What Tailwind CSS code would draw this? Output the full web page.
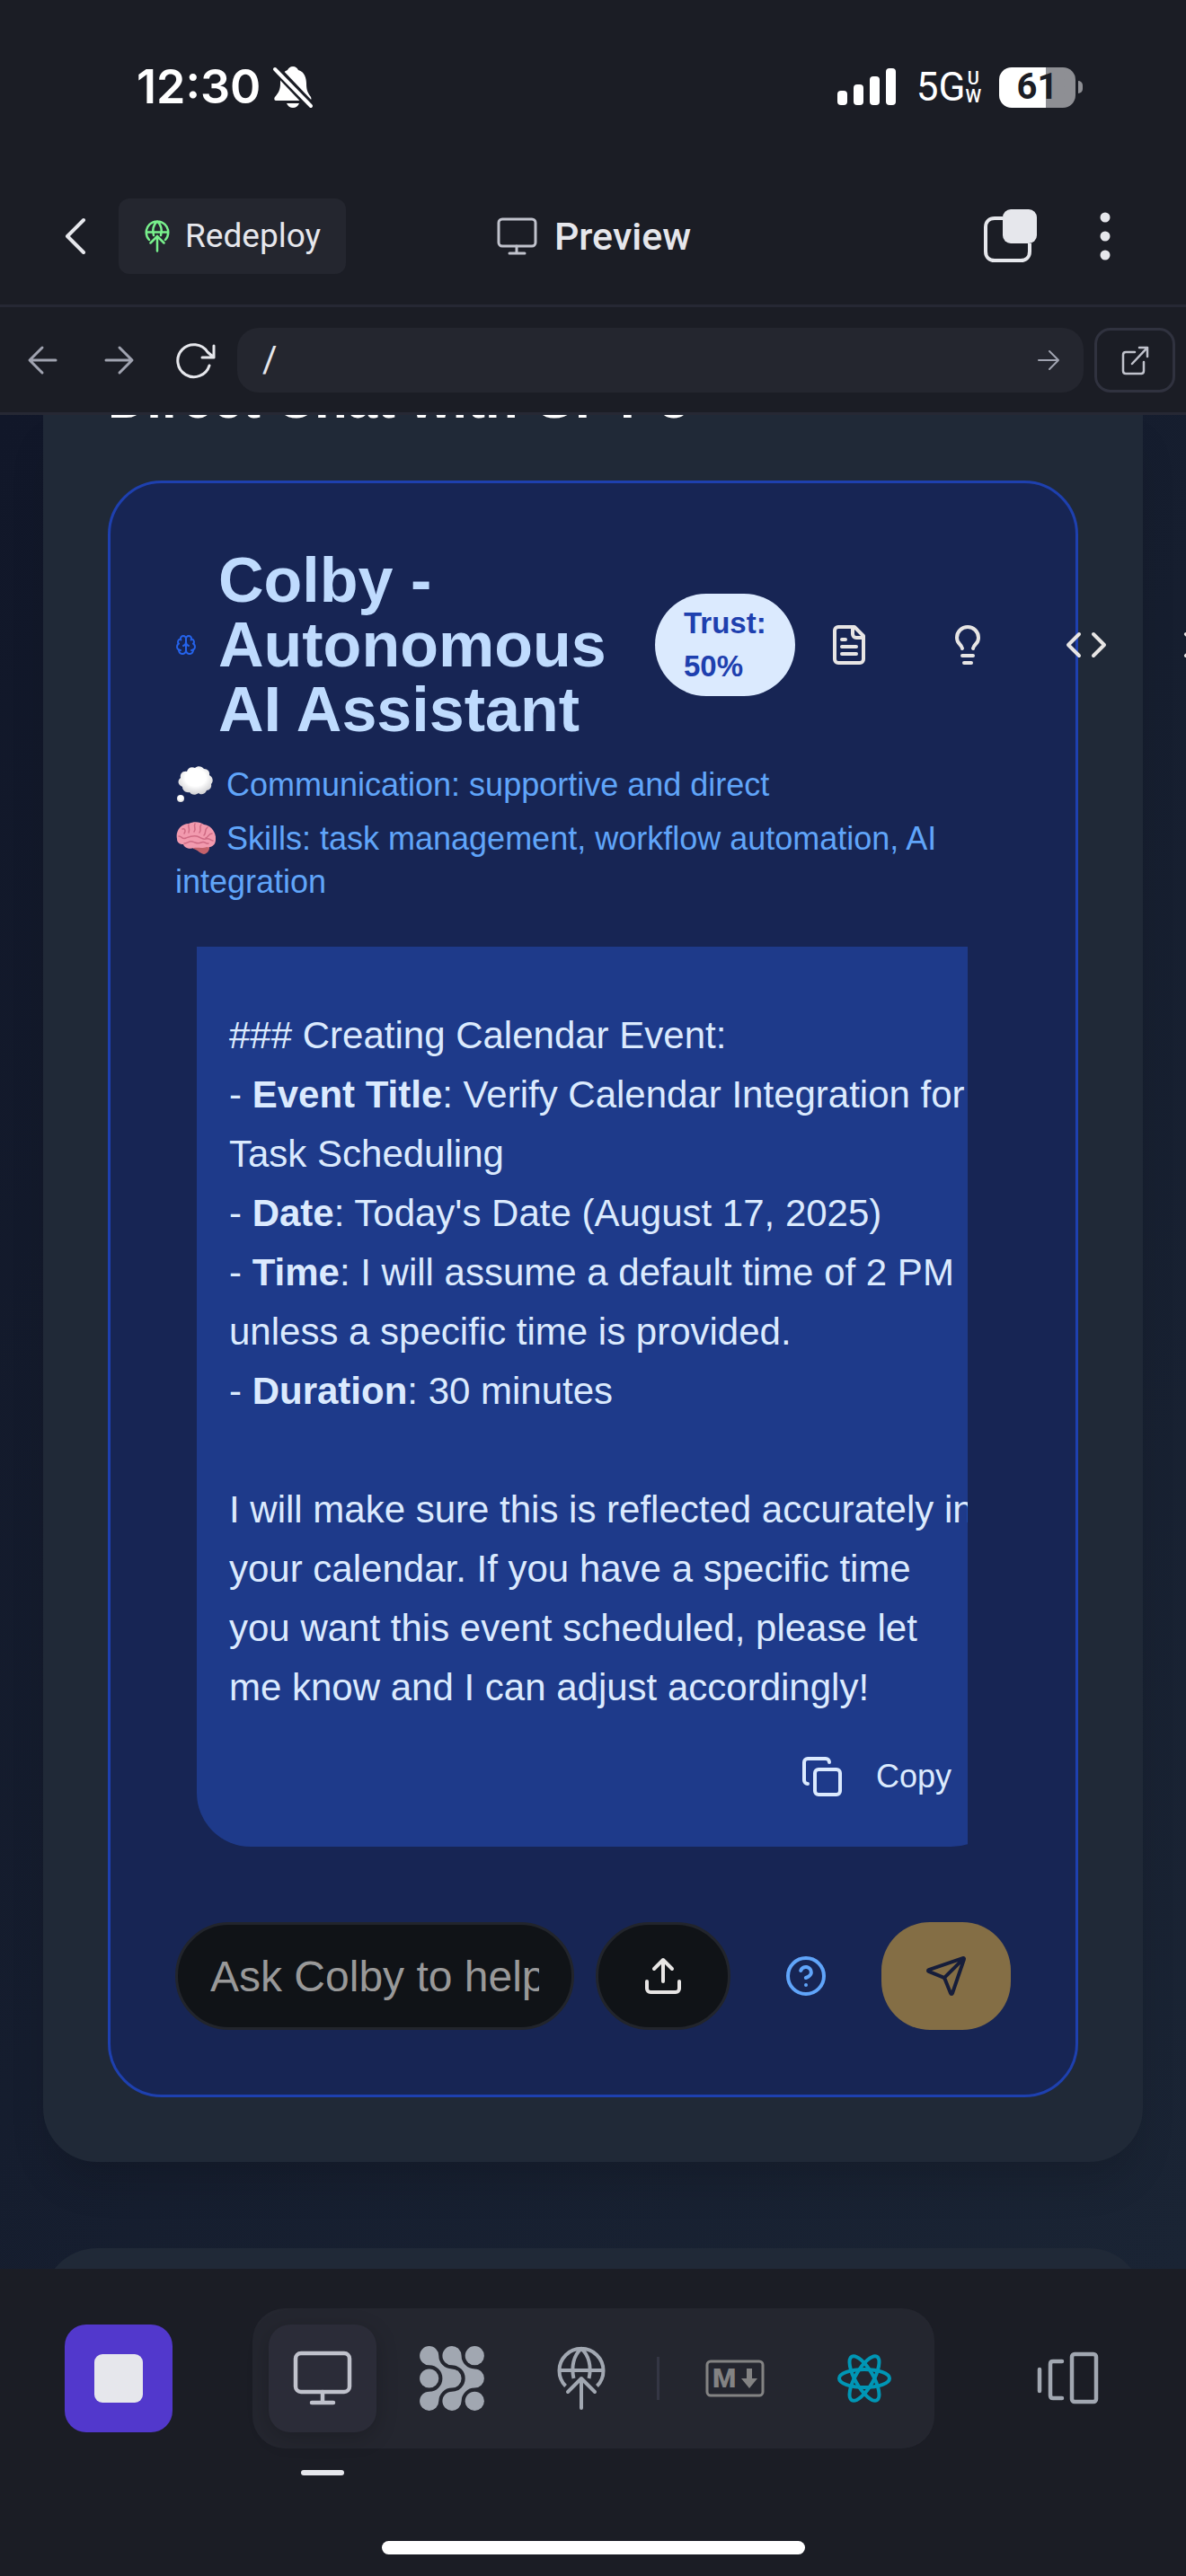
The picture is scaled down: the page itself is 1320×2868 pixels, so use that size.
<!DOCTYPE html>
<html lang="en">
<head>
<meta charset="utf-8">
<meta name="viewport" content="width=device-width, initial-scale=1">
<title>Preview</title>
<script src="https://cdn.jsdelivr.net/npm/@tailwindcss/browser@4"></script>
</head>
<body class="flex h-screen flex-col overflow-hidden bg-[#1b1d25] font-['Liberation_Sans',Arial,sans-serif] text-[#e6e7ec]">

<!-- Status bar -->
<div class="flex h-[187px] shrink-0 items-start justify-between pt-[62px] pr-[115px] pl-[152px] text-white">
  <div class="flex h-[70px] items-center gap-3">
    <span class="font-['Inter',sans-serif] text-[52px] font-semibold">12:30</span>
    <svg class="h-12 w-12" viewBox="0 0 48 48" fill="currentColor" aria-label="Silent mode">
      <path d="M24 1c3 0 5 2 6 4 7 2 9 9 9 15 0 8 2 11 5 15 1 2 0 4-1 4H5c-2 0-2-3-1-4 4-5 6-8 6-15 0-7 2-13 8-15 1-2 3-4 6-4z"/>
      <path d="M17 42h14c-1 3-4 5-7 5s-6-2-7-5z"/>
      <path d="M3 2l42 44" stroke="#1b1d25" stroke-width="10"/>
      <path d="M4 4l40 41" stroke="currentColor" stroke-width="4" stroke-linecap="round"/>
    </svg>
  </div>
  <div class="flex h-[70px] items-center">
    <svg class="mr-[22px] h-[42px] w-[66px]" viewBox="0 0 66 42" fill="currentColor" aria-label="Signal">
      <rect x="0" y="25" width="11" height="16" rx="4"/><rect x="18" y="18" width="11" height="23" rx="4"/><rect x="36" y="9" width="11" height="32" rx="4"/><rect x="54" y="0" width="11" height="41" rx="4"/>
    </svg>
    <span class="font-['Roboto',sans-serif] text-[44px]">5G</span>
    <span class="mr-5 flex flex-col items-center font-['Roboto',sans-serif] text-xl leading-5 font-medium"><span>U</span><span>W</span></span>
    <span class="flex h-[45px] w-[85px] items-center justify-center rounded-[14px] bg-linear-to-r from-white from-61% to-[#8e8f94] to-61% font-['Roboto',sans-serif] text-[40px] font-bold text-[#1b1d25]">61</span>
    <span class="ml-[3px] h-[14px] w-[5px] rounded-r-full bg-[#8e8f94]"></span>
  </div>
</div>

<!-- App header -->
<header class="grid h-[155px] shrink-0 grid-cols-[1fr_auto_1fr] items-center border-b-3 border-[#262834] font-['Roboto',sans-serif]">
  <div class="flex items-center pl-9">
    <button class="flex h-24 w-24 items-center justify-center" aria-label="Back">
      <svg class="h-12 w-12" viewBox="0 0 48 48" fill="none" stroke="currentColor" stroke-width="4" stroke-linecap="round" stroke-linejoin="round"><path d="M33 6L15 24l18 18"/></svg>
    </button>
    <button class="flex h-[84px] items-center gap-4 rounded-xl bg-[#24262f] px-7 text-[37px]">
      <svg class="h-9 w-[30px]" viewBox="0 0 54 72" fill="none" stroke="#78f08c" stroke-width="5" stroke-linecap="round"><path d="M9 44a24.500 24.500 0 1 1 36 0M3 27h48M19 34c-3-12 0-24 8-31 8 7 11 19 8 31M27 36v33M12 51l15-15 15 15"/></svg>
      Redeploy
    </button>
  </div>
  <h1 class="flex items-center gap-[18px] text-[43px] font-medium">
    <svg class="h-12 w-12" viewBox="0 0 48 48" fill="none" stroke="#c0c2cc" stroke-width="3" stroke-linecap="round" stroke-linejoin="round"><rect x="4" y="5" width="41" height="30" rx="4"/><path d="M24 35v8M16 43h17"/></svg>
    Preview
  </h1>
  <div class="flex items-center justify-end gap-2.5 pr-[42px]">
    <button class="flex h-24 w-24 items-center justify-center" aria-label="Tabs">
      <svg class="h-[60px] w-[60px]" viewBox="0 0 60 60"><path d="M22 10H13C7 10 3 14 3 20V47C3 53 7 57 13 57H42C48 57 52 53 52 47V38" fill="none" stroke="currentColor" stroke-width="4"/><rect x="22" y="0" width="38" height="38" rx="9" fill="currentColor"/></svg>
    </button>
    <button class="flex h-24 w-24 items-center justify-center" aria-label="More">
      <svg class="h-[60px] w-3" viewBox="0 0 12 60" fill="currentColor"><circle cx="6" cy="9" r="5.500"/><circle cx="6" cy="30" r="5.500"/><circle cx="6" cy="51" r="5.500"/></svg>
    </button>
  </div>
</header>

<!-- Address bar -->
<nav class="flex h-[120px] shrink-0 items-center gap-3 border-b-3 border-[#262834] px-3">
  <button class="flex h-[72px] w-[72px] items-center justify-center text-[#a0a3b0]" aria-label="Go back"><svg class="h-12 w-12" viewBox="0 0 48 48" fill="none" stroke="currentColor" stroke-width="3" stroke-linecap="round" stroke-linejoin="round"><path d="M38 24H10M23 10L9 24l14 14"/></svg></button>
  <button class="flex h-[72px] w-[72px] items-center justify-center text-[#a0a3b0]" aria-label="Go forward"><svg class="h-12 w-12" viewBox="0 0 48 48" fill="none" stroke="currentColor" stroke-width="3" stroke-linecap="round" stroke-linejoin="round"><path d="M10 24h28M25 10l14 14-14 14"/></svg></button>
  <button class="flex h-[72px] w-[72px] items-center justify-center" aria-label="Reload"><svg class="h-12 w-12" viewBox="0 0 48 48" fill="none" stroke="currentColor" stroke-width="3" stroke-linecap="round" stroke-linejoin="round"><path d="M41 30a18 18 0 1 1-2-15l7 6M46 8v13H33"/></svg></button>
  <form class="flex h-[72px] min-w-0 flex-1 items-center rounded-3xl bg-[#24262f] pr-[15px] pl-7">
    <input class="min-w-0 flex-1 bg-transparent font-['Roboto',sans-serif] text-[40px] outline-none" aria-label="Path" value="/">
    <button type="button" class="flex h-12 w-12 items-center justify-center text-[#a0a3b0]" aria-label="Go"><svg class="h-9 w-9" viewBox="0 0 36 36" fill="none" stroke="currentColor" stroke-width="2" stroke-linecap="round" stroke-linejoin="round"><path d="M7 18h22M19 8l10 10-10 10"/></svg></button>
  </form>
  <button class="flex h-[72px] w-[90px] items-center justify-center rounded-[18px] border-3 border-[#30323f] text-[#c0c2cc]" aria-label="Open in new tab"><svg class="h-9 w-9" viewBox="0 0 36 36" fill="none" stroke="currentColor" stroke-width="2.500" stroke-linecap="round" stroke-linejoin="round"><path d="M18 9H8c-2 0-3 1-3 3v18c0 2 1 3 3 3h17c2 0 3-1 3-3V20M15 22L32 4M23 4h9v10"/></svg></button>
</nav>

<!-- Previewed page -->
<main class="flex min-h-0 flex-1 flex-col gap-24 overflow-hidden bg-linear-to-br from-[#111729] to-[#1a2434] px-12">
  <section class="shrink-0 rounded-b-[60px] bg-[#202937] px-[72px] pb-[72px] shadow-[0_30px_45px_-9px_rgba(0,0,0,0.15)]">
    <h2 class="-mt-[47px] text-[60px] leading-[60px] font-bold text-white">Direct Chat with GPT-5</h2>

    <div class="mt-[60px] rounded-[60px] border-3 border-[#1e40af] bg-[#172554] p-[72px]">
      <div class="flex items-center">
        <svg class="mr-6 h-6 w-6 shrink-0" viewBox="0 0 24 24" fill="none" stroke="#2563eb" stroke-width="2" stroke-linecap="round" stroke-linejoin="round"><path d="M12 5a3 3 0 1 0-5.997.125 4 4 0 0 0-2.526 5.770 4 4 0 0 0 .556 6.588A4 4 0 1 0 12 18Z"/><path d="M12 5a3 3 0 1 1 5.997.125 4 4 0 0 1 2.526 5.770 4 4 0 0 1-.556 6.588A4 4 0 1 1 12 18Z"/><path d="M15 13a4.500 4.500 0 0 1-3-4 4.500 4.500 0 0 1-3 4M17.600 6.500a3 3 0 0 0 .399-1.375M6.003 5.125A3 3 0 0 0 6.401 6.500M3.477 10.896a4 4 0 0 1 .585-.396M19.938 10.500a4 4 0 0 1 .585.396M6 18a4 4 0 0 1-1.967-.516M19.967 17.484A4 4 0 0 1 18 18"/></svg>
        <h3 class="w-[486px] shrink-0 text-[70px] leading-[72px] font-bold text-[#bfdbfe]">Colby - Autonomous AI Assistant</h3>
        <span class="flex h-[114px] w-[156px] shrink-0 items-center rounded-full bg-[#dbeafe] pl-8 text-[33px] leading-[48px] font-bold text-[#1e40af]">Trust:<br>50%</span>
        <div class="flex shrink-0 gap-3 text-[#e7e5e4]">
          <button class="flex h-[120px] w-[120px] items-center justify-center" aria-label="Documents"><svg class="h-12 w-12" viewBox="0 0 24 24" fill="none" stroke="currentColor" stroke-width="2" stroke-linecap="round" stroke-linejoin="round"><path d="M15 2H6a2 2 0 0 0-2 2v16a2 2 0 0 0 2 2h12a2 2 0 0 0 2-2V7Z"/><path d="M14 2v4a2 2 0 0 0 2 2h4M10 9H8M16 13H8M16 17H8"/></svg></button>
          <button class="flex h-[120px] w-[120px] items-center justify-center" aria-label="Ideas"><svg class="h-12 w-12" viewBox="0 0 24 24" fill="none" stroke="currentColor" stroke-width="2" stroke-linecap="round" stroke-linejoin="round"><path d="M15 14c.2-1 .7-1.700 1.500-2.500 1-.9 1.500-2.200 1.500-3.500A6 6 0 0 0 6 8c0 1 .2 2.200 1.500 3.500.7.7 1.300 1.500 1.500 2.500M9 18h6M10 22h4"/></svg></button>
          <button class="flex h-[120px] w-[120px] items-center justify-center" aria-label="Code"><svg class="h-12 w-12" viewBox="0 0 24 24" fill="none" stroke="currentColor" stroke-width="2" stroke-linecap="round" stroke-linejoin="round"><path d="M16 18l6-6-6-6M8 6l-6 6 6 6"/></svg></button>
          <button class="flex h-[120px] w-[102px] items-center justify-center" aria-label="Close"><svg class="h-12 w-12" viewBox="0 0 24 24" fill="none" stroke="currentColor" stroke-width="2" stroke-linecap="round" stroke-linejoin="round"><path d="M18 6L6 18M6 6l12 12"/></svg></button>
        </div>
      </div>

      <div class="mt-6 flex flex-col gap-3 text-4xl leading-[48px] text-[#60a5fa]">
        <p>
          <svg class="mr-0.5 inline-block h-[45px] w-[45px] align-[-10px]" viewBox="0 0 45 45" role="img" aria-label="Thought bubble"><defs><radialGradient id="puff" cx=".5" cy=".4" r=".6"><stop offset=".5" stop-color="#fff"/><stop offset="1" stop-color="#cfcfd2"/></radialGradient></defs><path d="M13 8c1-4 5-6 9-4 3-3 8-2 10 1 4 0 7 3 6 7 4 2 5 7 2 10 1 4-2 7-5 7-2 5-7 5-9 3-4 3-8 2-10-1-4 1-8-2-8-6-5-2-6-7-2-10-1-4 2-8 7-7z" fill="url(#puff)"/><circle cx="6" cy="38" r="4" fill="url(#puff)"/></svg>
          Communication: supportive and direct
        </p>
        <p>
          <svg class="mr-0.5 inline-block h-[45px] w-[45px] align-[-10px]" viewBox="0 0 45 45" role="img" aria-label="Brain"><path d="M20 31c4-2 14-3 18-2 1 5-1 10-6 11-5-1-7-5-12-6z" fill="#c4626b"/><path d="M2 23C0 15 6 6 15 6c6-3 13-2 17 1 8 1 14 9 13 17 0 6-5 9-10 8-5 2-11 0-14 1-5 2-11 0-12-4-4 0-7-2-7-6z" fill="#f29aae"/><path d="M8 12c3-1 4 2 2 5M15 7c-1 4 2 4 0 9M22 6c-2 4 2 5-1 9M29 7c-3 3 1 6-2 9M36 10c-4 3-1 6-4 9M41 17c-4 0-4 4-7 5M4 20c4 0 3 4 8 2s7-3 12-2 5 4 10 3 5 2 8 2M10 28c4 0 5-3 9-2s6 3 10 1 5 2 8 1" fill="none" stroke="#cf6b84" stroke-width="1.500" stroke-linecap="round"/></svg>
          Skills: task management, workflow automation, AI integration
        </p>
      </div>

      <div class="mt-12 mr-12 ml-6 overflow-hidden">
        <article class="-mr-[42px] rounded-b-[60px] bg-[#1e3a8a] px-9 pt-[66px] pb-9 text-[42px] leading-[66px] text-[#dbeafe]">
          <p class="whitespace-nowrap">### Creating Calendar Event:<br>- <b>Event Title</b>: Verify Calendar Integration for<br>Task Scheduling<br>- <b>Date</b>: Today's Date (August 17, 2025)<br>- <b>Time</b>: I will assume a default time of 2 PM<br>unless a specific time is provided.<br>- <b>Duration</b>: 30 minutes<br><br>I will make sure this is reflected accurately in<br>your calendar. If you have a specific time<br>you want this event scheduled, please let<br>me know and I can adjust accordingly!</p>
          <div class="mt-6 flex justify-end">
            <button class="flex h-[84px] items-center gap-9 pr-6 text-4xl"><svg class="h-12 w-12" viewBox="0 0 24 24" fill="none" stroke="currentColor" stroke-width="2" stroke-linecap="round" stroke-linejoin="round"><rect width="14" height="14" x="8" y="8" rx="2"/><path d="M4 16c-1.100 0-2-.9-2-2V4c0-1.100.9-2 2-2h10c1.100 0 2 .9 2 2"/></svg>Copy</button>
          </div>
        </article>
      </div>

      <form class="mt-[84px] flex items-center gap-6">
        <input class="h-[120px] min-w-0 flex-1 rounded-full border-3 border-[#22252c] bg-[#101317] px-9 text-5xl text-white outline-none placeholder:text-[#999999]" aria-label="Message" placeholder="Ask Colby to help with tasks...">
        <button type="button" class="flex h-[120px] w-[150px] items-center justify-center rounded-full border-3 border-[#22252c] bg-[#101317] text-[#e7e5e4]" aria-label="Upload"><svg class="h-12 w-12" viewBox="0 0 24 24" fill="none" stroke="currentColor" stroke-width="2" stroke-linecap="round" stroke-linejoin="round"><path d="M21 15v4a2 2 0 0 1-2 2H5a2 2 0 0 1-2-2v-4M17 8l-5-5-5 5M12 3v12"/></svg></button>
        <button type="button" class="flex h-[120px] w-[120px] items-center justify-center text-[#60a5fa]" aria-label="Help"><svg class="h-12 w-12" viewBox="0 0 24 24" fill="none" stroke="currentColor" stroke-width="2" stroke-linecap="round" stroke-linejoin="round"><circle cx="12" cy="12" r="10"/><path d="M9.090 9a3 3 0 0 1 5.830 1c0 2-3 3-3 3M12 17h.01"/></svg></button>
        <button type="button" class="flex h-[120px] w-36 items-center justify-center rounded-[54px] bg-[#846e45] text-[#161d3a]" aria-label="Send"><svg class="h-12 w-12" viewBox="0 0 24 24" fill="none" stroke="currentColor" stroke-width="2" stroke-linecap="round" stroke-linejoin="round"><path d="M14.536 21.686a.5.5 0 0 0 .937-.024l6.500-19a.496.496 0 0 0-.635-.635l-19 6.500a.5.5 0 0 0-.024.937l7.930 3.180a2 2 0 0 1 1.112 1.110zM21.854 2.147l-10.940 10.939"/></svg></button>
      </form>
    </div>
  </section>
  <section class="h-36 shrink-0 rounded-t-[60px] bg-[#202937]"></section>
</main>

<!-- Bottom dock -->
<footer class="flex h-[342px] shrink-0 flex-col items-center justify-between pt-11 pb-6">
  <div class="flex w-full items-center justify-between px-[72px] text-[#a1a7b1]">
    <button class="flex h-[120px] w-[120px] items-center justify-center rounded-3xl bg-[#5238cc]" aria-label="Stop"><span class="h-[54px] w-[54px] rounded-[9px] bg-[#e6e7ec]"></span></button>
    <div class="flex h-[156px] items-center gap-6 rounded-[36px] bg-[#24262f] px-[18px]">
      <button class="relative flex h-[120px] w-[120px] items-center justify-center rounded-3xl bg-[#2b2c38] text-[#c0c2cc] shadow-[0_6px_24px_rgba(0,0,0,0.2)]" aria-label="Preview">
        <svg class="h-[72px] w-[72px]" viewBox="0 0 72 72" fill="none" stroke="currentColor" stroke-width="4.500" stroke-linecap="round" stroke-linejoin="round"><rect x="6" y="8" width="60" height="43" rx="6"/><path d="M36 51v12M24 63h24"/></svg>
        <span class="absolute -bottom-12 left-9 h-1.5 w-12 rounded-full bg-[#e6e7ec]"></span>
      </button>
      <button class="flex h-[120px] w-[120px] items-center justify-center" aria-label="Agent">
        <svg class="h-[72px] w-[72px]" viewBox="0 0 72 72" fill="currentColor"><path id="blob" d="M21.300 10.700A14.700 14.700 0 0 0 36 25.400A10.600 10.600 0 0 1 36 46.600A14.700 14.700 0 0 0 21.300 61.300A10.600 10.600 0 1 1 10.700 50.700A14.700 14.700 0 0 0 10.700 21.300A10.600 10.600 0 1 1 21.300 10.700Z"/><use href="#blob" x="25.300"/><circle cx="10.700" cy="36" r="10.600"/><circle cx="61.300" cy="10.700" r="10.600"/><circle cx="61.300" cy="61.300" r="10.600"/></svg>
      </button>
      <button class="flex h-[120px] w-[120px] items-center justify-center" aria-label="Deployments">
        <svg class="h-[72px] w-[54px]" viewBox="0 0 54 72" fill="none" stroke="currentColor" stroke-width="4" stroke-linecap="round"><path stroke-linecap="butt" d="M9.500 44.500a24.500 24.500 0 1 1 35 0M3 27h48M18.500 36c-3-13 0-26 8.500-33 8.500 7 11.500 20 8.500 33"/><path d="M27 36v33M12 51l15-15 15 15" stroke-linejoin="round"/></svg>
      </button>
      <span class="h-12 w-[3px] bg-[#343644]"></span>
      <button class="flex h-[120px] w-[120px] items-center justify-center text-[#838383]" aria-label="Markdown">
        <svg class="h-[42px] w-[66px]" viewBox="0 0 66 42"><rect x="2" y="2" width="62" height="38" rx="4" fill="none" stroke="currentColor" stroke-width="3"/><text x="8" y="31" font-family="Roboto, sans-serif" font-weight="900" font-size="30" fill="currentColor">M</text><path d="M46 10h6v11h6l-9 11-9-11h6z" fill="currentColor"/></svg>
      </button>
      <button class="flex h-[120px] w-[120px] items-center justify-center text-[#0096b5]" aria-label="React">
        <svg class="h-[60px] w-[60px]" viewBox="-30 -30 60 60" fill="none" stroke="currentColor" stroke-width="4"><ellipse rx="28" ry="10"/><ellipse rx="28" ry="10" transform="rotate(60)"/><ellipse rx="28" ry="10" transform="rotate(120)"/></svg>
      </button>
    </div>
    <button class="flex h-[120px] w-[120px] items-center justify-center" aria-label="Switch tab">
      <svg class="h-[72px] w-[72px]" viewBox="0 0 72 72" fill="none" stroke="currentColor" stroke-width="4.500" stroke-linecap="round" stroke-linejoin="round"><path d="M5 26v24M30 17H20c-2 0-3 1-3 3v35c0 2 1 3 3 3h10"/><rect x="41" y="9" width="27" height="53" rx="3"/></svg>
    </button>
  </div>
  <span class="h-[15px] w-[471px] rounded-full bg-white"></span>
</footer>
</body>
</html>
